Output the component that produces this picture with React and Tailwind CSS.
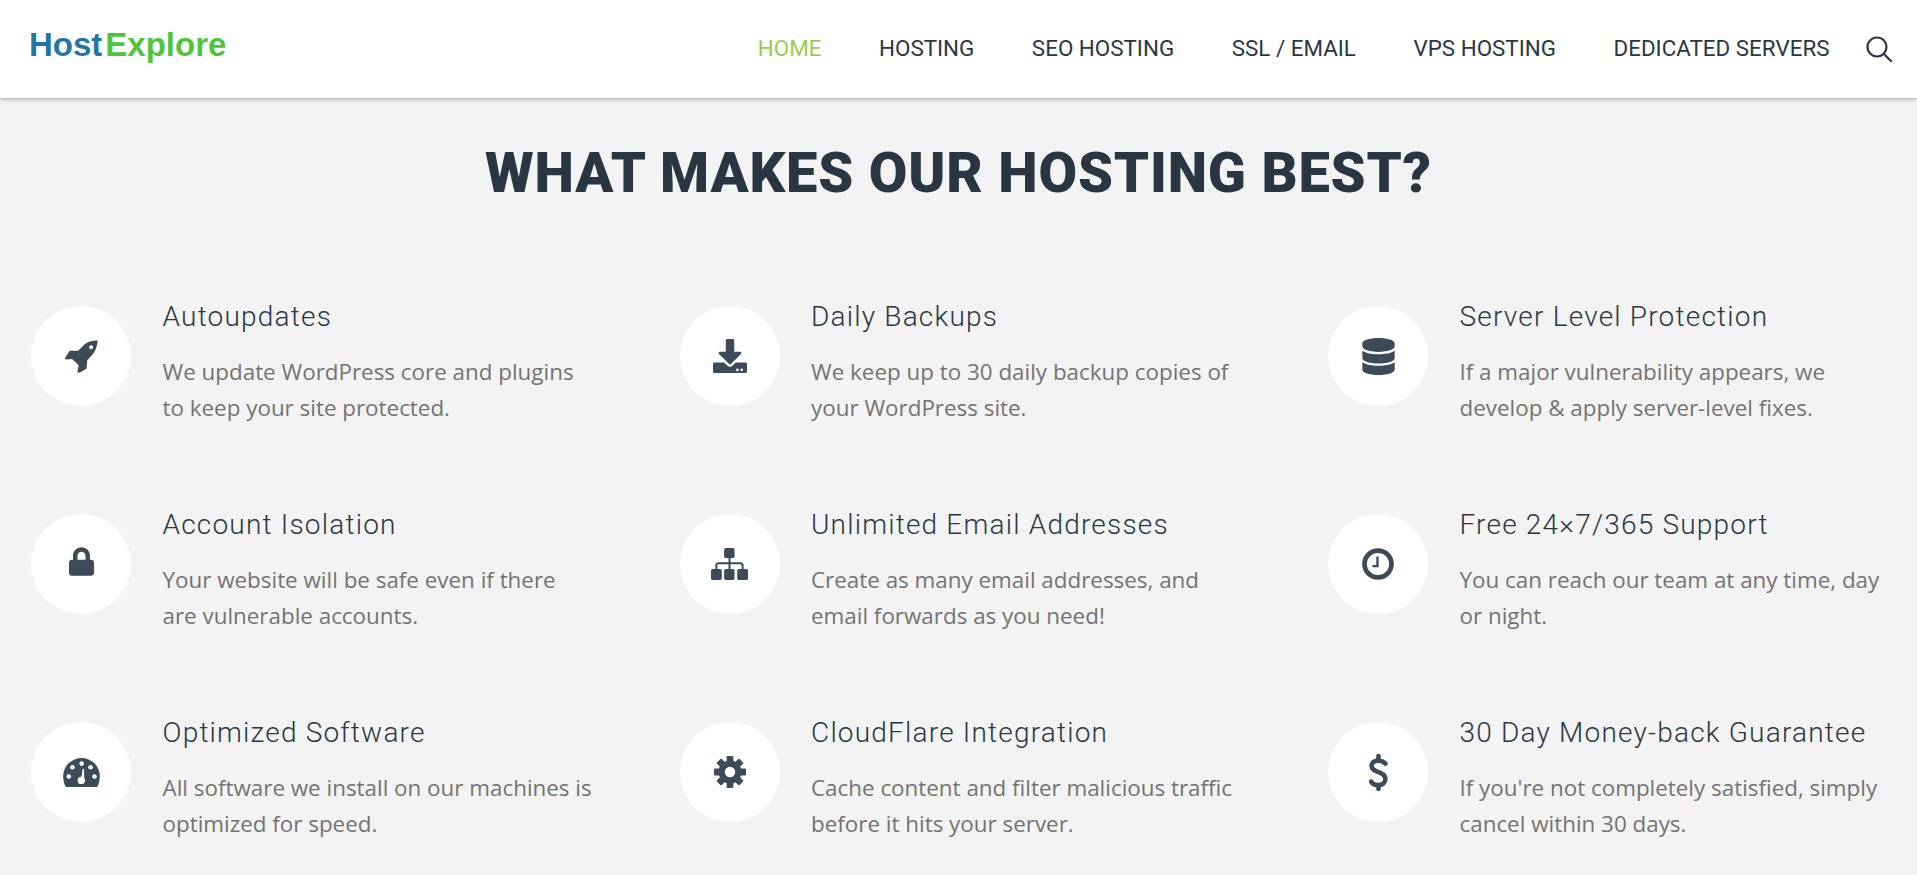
import { FaDownload, FaDatabase, FaLock } from 'react-icons/fa';

const navLinks = ['HOME', 'HOSTING', 'SEO HOSTING', 'SSL / EMAIL', 'VPS HOSTING', 'DEDICATED SERVERS'];

function RocketIcon() {
  return (
    <svg viewBox="0 0 101 101" className="w-[33px] h-[33px] fill-[#3d4a58]">
      <path
        fillRule="evenodd"
        d="M100 1C85 2 68 5 55 18L40 33H14L0 55Q0 60 6 60L22 58L42 78L38 95Q38 101 44 100L66 88L68 62L83 46C95 33 99 16 100 1ZM80 16A6 6 0 1 1 80 28A6 6 0 1 1 80 16Z"
      />
    </svg>
  );
}

function SitemapIcon() {
  return (
    <svg viewBox="0 0 110 95" className="w-[37px] h-8 fill-[#3d4a58]">
      <rect x="39" y="0" width="31" height="30" rx="5" />
      <rect x="0" y="62" width="32" height="33" rx="5" />
      <rect x="39" y="62" width="31" height="33" rx="5" />
      <rect x="78" y="62" width="32" height="33" rx="5" />
      <path d="M52 30H58V42H88C92 42 97 46 97 50V62H91V52C91 50 90 48 88 48H58V62H52V48H22C20 48 19 50 19 52V62H13V50C13 46 18 42 22 42H52Z" />
    </svg>
  );
}

function ClockIcon() {
  return (
    <svg viewBox="0 0 95 95" className="w-8 h-8 fill-none stroke-[#3d4a58]">
      <circle cx="47.5" cy="47.5" r="40" strokeWidth="14" />
      <path d="M46 25V54H31" strokeWidth="7" />
    </svg>
  );
}

function GaugeIcon() {
  return (
    <svg viewBox="0 0 111 88" className="w-[37px] h-[29px]">
      <path className="fill-[#3d4a58]" d="M8 88C2 78 0 66 0 55A55.5 55 0 0 1 111 55C111 66 109 78 103 88Z" />
      <g className="fill-white">
        <circle cx="17" cy="56" r="7" />
        <circle cx="28" cy="28" r="7" />
        <circle cx="56" cy="17" r="7" />
        <circle cx="83" cy="28" r="7" />
        <circle cx="95" cy="56" r="7" />
        <circle cx="55" cy="68" r="11" />
        <path d="M55 60L59 33H63L64 62Z" />
      </g>
    </svg>
  );
}

function CogIcon() {
  const teeth = [0, 45, 90, 135, 180, 225, 270, 315];
  return (
    <svg viewBox="0 0 32 32" className="w-8 h-8">
      <g className="fill-[#3d4a58]">
        <circle cx="16" cy="16" r="11.5" />
        {teeth.map((deg) => (
          <rect key={deg} x="12.6" y="0" width="6.8" height="8" rx="1" transform={`rotate(${deg} 16 16)`} />
        ))}
      </g>
      <circle cx="16" cy="16" r="5.2" className="fill-white" />
    </svg>
  );
}

function DollarIcon() {
  return (
    <svg viewBox="0 0 58 112" className="w-[19px] h-[37px] fill-none stroke-[#3d4a58]" strokeWidth="14" strokeLinecap="round">
      <path d="M29 6V16M29 96V106" />
      <path d="M50 29C42 18 9 14 8 36C7 58 50 50 50 76C50 100 14 98 7 84" />
    </svg>
  );
}

const features = [
  { icon: <RocketIcon />, title: 'Autoupdates', lines: ['We update WordPress core and plugins', 'to keep your site protected.'] },
  { icon: <FaDownload className="w-[34px] h-[34px] text-[#3d4a58]" />, title: 'Daily Backups', lines: ['We keep up to 30 daily backup copies of', 'your WordPress site.'] },
  { icon: <FaDatabase className="w-[33px] h-[37px] text-[#3d4a58]" />, title: 'Server Level Protection', lines: ['If a major vulnerability appears, we', 'develop & apply server-level fixes.'] },
  { icon: <FaLock className="w-[25px] h-[29px] -mt-[5px] text-[#3d4a58]" />, title: 'Account Isolation', lines: ['Your website will be safe even if there', 'are vulnerable accounts.'] },
  { icon: <SitemapIcon />, title: 'Unlimited Email Addresses', lines: ['Create as many email addresses, and', 'email forwards as you need!'] },
  { icon: <ClockIcon />, title: 'Free 24×7/365 Support', lines: ['You can reach our team at any time, day', 'or night.'] },
  { icon: <GaugeIcon />, title: 'Optimized Software', lines: ['All software we install on our machines is', 'optimized for speed.'] },
  { icon: <CogIcon />, title: 'CloudFlare Integration', lines: ['Cache content and filter malicious traffic', 'before it hits your server.'] },
  { icon: <DollarIcon />, title: '30 Day Money-back Guarantee', lines: ["If you're not completely satisfied, simply", 'cancel within 30 days.'] },
];

function App() {
  return (
    <div className="h-[875px] overflow-hidden bg-[#f3f3f3]">
      <header className="h-[98px] bg-white shadow-[0_1px_4px_rgba(0,0,0,0.35)] flex items-center justify-between pl-[29px] pr-[25px] relative">
        <div className="mb-[10px] font-['Liberation_Sans',sans-serif] font-bold text-[33px] leading-none flex gap-[3px]">
          <span className="text-[#2276a5]">Host</span>
          <span className="text-[#50c53c]">Explore</span>
        </div>
        <nav className="flex items-center gap-[57.5px] font-['Roboto',sans-serif] text-[22.4px] text-[#2a3743]">
          {navLinks.map((link) => (
            <a key={link} className={link === 'HOME' ? 'text-[#9ccc50]' : ''}>
              {link}
            </a>
          ))}
          <svg viewBox="0 0 26 26" className="w-[26px] h-[26px] -ml-[21px] fill-none stroke-[#2a3743]" strokeWidth="2.2" strokeLinecap="round">
            <circle cx="11" cy="11" r="9.5" />
            <path d="M18 18L25 25" />
          </svg>
        </nav>
      </header>

      <h2 className="mt-[39px] text-center font-['Roboto',sans-serif] font-black text-[56px] leading-[72px] tracking-[0.8px] text-[#2a3743]">
        WHAT MAKES OUR HOSTING BEST?
      </h2>

      <div className="mt-[97px] pl-[31px] grid grid-cols-[repeat(3,648.5px)] auto-rows-[208px]">
        {features.map((f) => (
          <div key={f.title} className="flex items-start gap-[31.5px]">
            <div className="w-[100px] h-[100px] shrink-0 rounded-full bg-white flex items-center justify-center">{f.icon}</div>
            <div className="pt-px">
              <h3 className="font-['Roboto',sans-serif] font-light text-[28px] leading-[20px] tracking-[1.2px] text-[#2a3743]">{f.title}</h3>
              <div className="mt-[27px] font-['Open_Sans',sans-serif] text-[22.4px] leading-9 text-[#737373]">
                {f.lines.map((line) => (
                  <p key={line}>{line}</p>
                ))}
              </div>
            </div>
          </div>
        ))}
      </div>
    </div>
  );
}

export default App;
